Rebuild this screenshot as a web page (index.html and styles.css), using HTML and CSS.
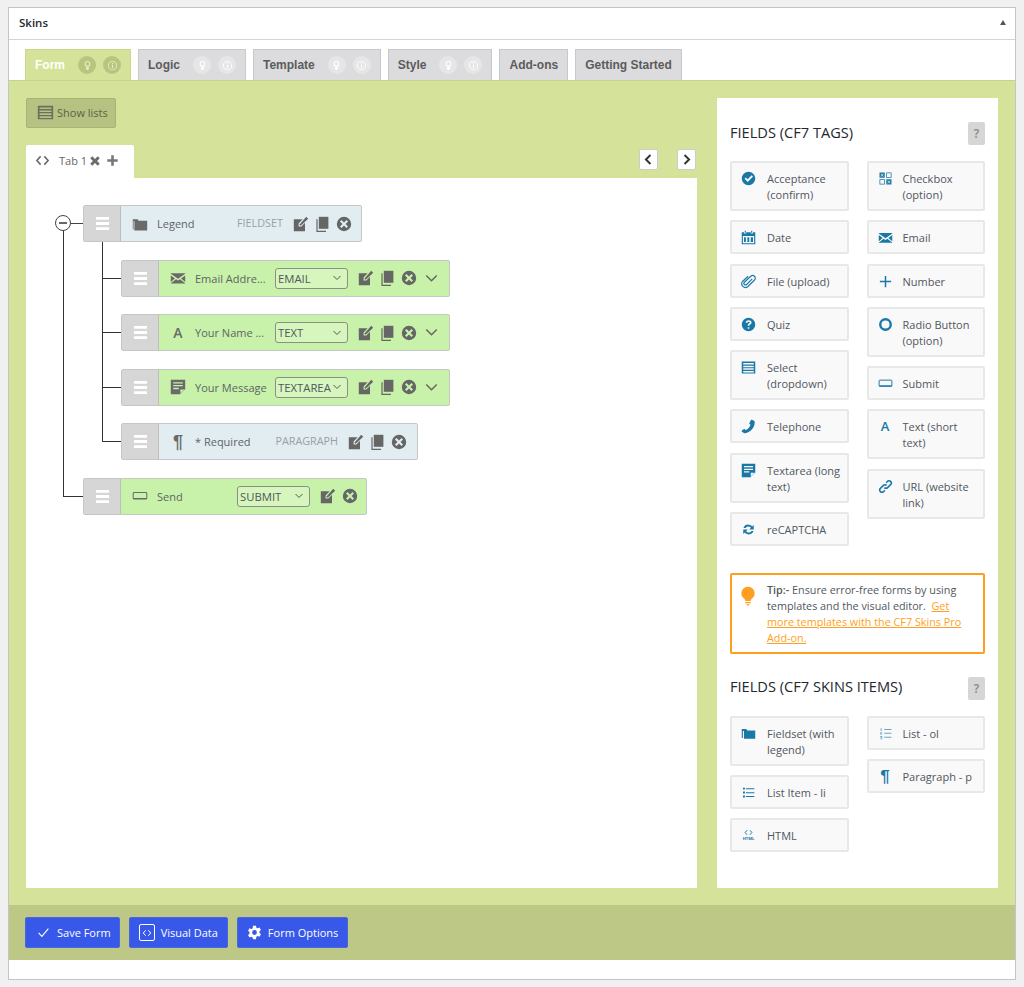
FILE: index.html
```html
<!DOCTYPE html>
<html lang="en">

<head>
    <meta charset="UTF-8">
    <meta name="viewport" content="width=device-width, initial-scale=1.0">
    <title>Skins</title>
    <link rel="stylesheet" href="styles.css">
</head>

<body>
    <svg class="sprite" xmlns="http://www.w3.org/2000/svg">
        <symbol id="i-bulb" viewBox="0 0 20 20"><path d="M10 1.500a6 6 0 0 0-3.600 10.800c.8.700 1 1.400 1.100 2.200h5c.1-.8.300-1.500 1.100-2.200A6 6 0 0 0 10 1.500z"/><path d="M7.500 15.500h5v1.200h-5zM8.300 17.500h3.400l-.8 1.200H9.100z"/></symbol>
        <symbol id="i-bulb-line" viewBox="0 0 20 20"><path d="M10 3a4.500 4.500 0 0 0-1.500 8.750V14H7.500v1.500h1V17h3v-1.500h1V14h-1v-2.250A4.500 4.500 0 0 0 10 3zm0 1.800a2.700 2.700 0 1 1 0 5.400 2.700 2.700 0 0 1 0-5.400z"/></symbol>
        <symbol id="i-info" viewBox="0 0 20 20"><path fill-rule="evenodd" d="M10 3a7 7 0 1 0 0 14 7 7 0 0 0 0-14zm0 1.300a5.700 5.700 0 1 1 0 11.400 5.700 5.700 0 0 1 0-11.400z"/><path d="M9.100 6h1.800v1.700H9.100zM9.100 8.700h1.800V14H9.100z"/></symbol>
        <symbol id="i-table" viewBox="0 0 20 20"><path fill-rule="evenodd" d="M1 2h18v16H1zm2 2v2h14V4zm0 3.500v2h14v-2zM3 11v2h14v-2zm0 3.500v2h14v-2z"/></symbol>
        <symbol id="i-code" viewBox="0 0 20 20"><path fill="none" stroke="currentColor" stroke-width="2" d="M7.500 4.500 2.500 10l5 5.500M12.500 4.500l5 5.500-5 5.500"/></symbol>
        <symbol id="i-cross" viewBox="0 0 20 20"><path d="M5.500 2 10 6.500 14.500 2 18 5.500 13.500 10l4.500 4.500-3.500 3.500L10 13.500 5.500 18 2 14.500 6.500 10 2 5.500z"/></symbol>
        <symbol id="i-plus" viewBox="0 0 20 20"><path d="M8 2h4v6h6v4h-6v6H8v-6H2V8h6z"/></symbol>
        <symbol id="i-thin-plus" viewBox="0 0 20 20"><path d="M9 2.500h2V9h6.500v2H11v6.500H9V11H2.500V9H9z"/></symbol>
        <symbol id="i-left" viewBox="0 0 20 20"><path fill="none" stroke="currentColor" stroke-width="3" d="M13 3 6 10l7 7"/></symbol>
        <symbol id="i-right" viewBox="0 0 20 20"><path fill="none" stroke="currentColor" stroke-width="3" d="m7 3 7 7-7 7"/></symbol>
        <symbol id="i-down" viewBox="0 0 20 20"><path fill="none" stroke="currentColor" stroke-width="2" d="m3 6 7 7 7-7"/></symbol>
        <symbol id="i-bars" viewBox="0 0 16 16"><path d="M1 1h14v3H1zM1 6.500h14v3H1zM1 12h14v3H1z"/></symbol>
        <symbol id="i-folder" viewBox="0 0 20 20"><path d="M1 4h6l1.500 2H19v11H4V6.500H2.500V16H1z"/></symbol>
        <symbol id="i-folder-tree" viewBox="0 0 20 20"><path d="M1 4h6l1.500 2H19v12H3V6.500H2V17H1z"/></symbol>
        <symbol id="i-edit" viewBox="0 0 20 20"><path d="M1 4h11l-5 5.500V13h3.500L15 8.500V19H1z"/><path d="M16.500 1 19 3.500 10 12H8.500v-1.700z"/></symbol>
        <symbol id="i-copy" viewBox="0 0 20 20"><path d="M6 1h12v15H6z"/><path d="M3 4h1.500v14.500H15V20H3z"/></symbol>
        <symbol id="i-close" viewBox="0 0 20 20"><path fill-rule="evenodd" d="M10 1a9 9 0 1 0 0 18 9 9 0 0 0 0-18zM6.900 5 10 8.100 13.100 5 15 6.900 11.900 10l3.100 3.100-1.900 1.900L10 11.900 6.900 15 5 13.100 8.100 10 5 6.900z"/></symbol>
        <symbol id="i-mail" viewBox="0 0 20 20"><path d="M1 4h18v.8L10 11 1 4.800zM1 6.800l5.200 3.700L1 15zM19 6.800v8.200l-5.200-4.500zM7.500 11.500 10 13.200l2.500-1.700 6.500 5v.500H1v-.500z"/></symbol>
        <symbol id="i-note" viewBox="0 0 20 20"><path fill-rule="evenodd" d="M1 1h18v11.500L12.500 19H1zm3 3v1.700h12V4zm0 3.500v1.700h12V7.500zM4 11v1.700h7V11zm9 7 5-5h-5z"/></symbol>
        <symbol id="i-button" viewBox="0 0 20 20"><path fill="none" stroke="currentColor" stroke-width="1.300" d="M2.500 5.500h15a1 1 0 0 1 1 1v6a1 1 0 0 1-1 1h-15a1 1 0 0 1-1-1v-6a1 1 0 0 1 1-1z"/><path d="M1.500 12.500h17v1.700h-17z"/></symbol>
        <symbol id="i-check-circle" viewBox="0 0 20 20"><path fill-rule="evenodd" d="M10 1a9 9 0 1 0 0 18 9 9 0 0 0 0-18zm4.200 4.800 1.800 1.600-7 7.100-4.200-4.200 1.700-1.700 2.500 2.500z"/></symbol>
        <symbol id="i-grid" viewBox="0 0 20 20"><path fill-rule="evenodd" d="M2 2h7v7H2zm2 1.500L3.500 4 5 5.500 3.500 7l.5.500L5.500 6 7 7.500l.5-.5L6 5.500 7.500 4 7 3.500 5.500 5zM11 2h7v7h-7zm1 1v5h5V3zM2 11h7v7H2zm1 1v5h5v-5zM11 11h7v7h-7zm2 1.500-.5.500 1.500 1.500-1.500 1.500.5.500 1.500-1.500 1.500 1.500.5-.5-1.500-1.500L16.500 13l-.5-.5-1.500 1.500z"/></symbol>
        <symbol id="i-calendar" viewBox="0 0 20 20"><path fill-rule="evenodd" d="M5 1h1.500v2.500H5zM13.500 1H15v2.500h-1.500zM1 3h3v1.500h3V3h6v1.500h3V3h3v16H1zm1.500 5v9.500h15V8zM4 9.500h2.500V16H4zM8.500 9.500H11V16H8.500zM13 9.500h3V16h-3z"/></symbol>
        <symbol id="i-clip" viewBox="0 0 20 20"><path fill="none" stroke="currentColor" stroke-width="1.500" d="M15 6.500 7.500 14a2 2 0 0 1-3-3l8.500-8a3.500 3.500 0 0 1 5 5l-9 9a5 5 0 0 1-7-7l7.500-7"/></symbol>
        <symbol id="i-help" viewBox="0 0 20 20"><path fill-rule="evenodd" d="M10 1a9 9 0 1 0 0 18 9 9 0 0 0 0-18zM9 13.500h2.200v2.200H9zM10.200 4.300c2.300 0 3.800 1.200 3.800 3 0 1.400-.8 2.100-1.800 2.800-.8.500-1 .8-1 1.700H9c0-1.700.5-2.400 1.500-3 .8-.5 1.200-.9 1.200-1.500 0-.7-.6-1.100-1.500-1.100-1 0-1.600.5-1.700 1.500H6.200c.1-2.200 1.600-3.400 4-3.400z"/></symbol>
        <symbol id="i-ring" viewBox="0 0 20 20"><circle cx="10" cy="10" r="7" fill="none" stroke="currentColor" stroke-width="3.200"/></symbol>
        <symbol id="i-phone" viewBox="0 0 20 20"><path d="M14.500 1 18 2.500c1 3.500-.5 7.500-3 10.700-2.800 3.200-6.800 5.500-10.800 5.800L1 16.500c-.3-.5-.2-1 .2-1.300l2.800-1.800c.4-.3 1-.2 1.300.2l1 1.300c2.800-1.200 5.500-4.300 6.400-7.300l-1.300-.9c-.4-.3-.5-.8-.3-1.200l2-4c.2-.5.500-.6.900-.5z"/></symbol>
        <symbol id="i-link" viewBox="0 0 20 20"><path fill="none" stroke="currentColor" stroke-width="2" d="M8.500 11.500a3 3 0 0 0 4.300 0l4-4a3 3 0 0 0-4.300-4.300L10.800 5M11.500 8.500a3 3 0 0 0-4.300 0l-4 4a3 3 0 0 0 4.300 4.300L9.200 15"/></symbol>
        <symbol id="i-sync" viewBox="0 0 20 20"><path d="M10 3.500c2 0 3.800.9 5 2.400l2-2V10h-6l2.200-2.200A4.300 4.300 0 0 0 6 8H3.300A6.900 6.900 0 0 1 10 3.500zM3 10h6l-2.200 2.200A4.300 4.300 0 0 0 14 12h2.700A6.900 6.900 0 0 1 5 14.100l-2 2z"/></symbol>
        <symbol id="i-ol" viewBox="0 0 20 20"><path d="M8 3h11v1.500H8zM8 9h11v1.500H8zM8 15h11v1.500H8zM2.500 2H4v4H2.500zM1.500 8H5v1l-2 1.500h2v1H1.500v-1l2-1.500h-2zM1.500 14H5v5H1.500v-1h2.300v-1H2v-1h1.800v-1H1.500z"/></symbol>
        <symbol id="i-ul" viewBox="0 0 20 20"><path d="M6 3.500h13V5H6zM6 9.500h13V11H6zM6 15.500h13V17H6zM1.500 2.500h3v3h-3zM1.500 8.500h3v3h-3zM1.500 14.500h3v3h-3z"/></symbol>
        <symbol id="i-gear" viewBox="0 0 20 20"><path fill-rule="evenodd" d="M8 1h4l.5 2.500 1.700.8 2.400-1.100 2 3.400-1.900 1.700v2.400l1.900 1.700-2 3.400-2.400-1.100-1.700.8L12 19H8l-.5-2.500-1.700-.8-2.400 1.100-2-3.400 1.900-1.700V9.300L1.400 7.600l2-3.400 2.400 1.100 1.700-.8zM10 6.800a3.200 3.200 0 1 0 0 6.400 3.200 3.200 0 0 0 0-6.400z"/></symbol>
        <symbol id="i-check" viewBox="0 0 20 20"><path fill="none" stroke="currentColor" stroke-width="1.700" d="m2.500 10.500 5 5.500 10-12"/></symbol>
    </svg>

    <div class="metabox">
        <div class="metabox-head">
            <h2>Skins</h2>
            <span class="collapse"></span>
        </div>

        <div class="tabs">
            <div class="tab active">Form
                <span class="bubble bubble-first"><svg><use href="#i-bulb-line"/></svg></span>
                <span class="bubble"><svg><use href="#i-info"/></svg></span>
            </div>
            <div class="tab">Logic
                <span class="bubble bubble-first"><svg><use href="#i-bulb-line"/></svg></span>
                <span class="bubble"><svg><use href="#i-info"/></svg></span>
            </div>
            <div class="tab">Template
                <span class="bubble bubble-first"><svg><use href="#i-bulb-line"/></svg></span>
                <span class="bubble"><svg><use href="#i-info"/></svg></span>
            </div>
            <div class="tab">Style
                <span class="bubble bubble-first"><svg><use href="#i-bulb-line"/></svg></span>
                <span class="bubble"><svg><use href="#i-info"/></svg></span>
            </div>
            <div class="tab">Add-ons</div>
            <div class="tab">Getting Started</div>
        </div>

        <div class="main">
            <div class="editor">
                <button class="show-lists"><svg><use href="#i-table"/></svg>Show lists</button>

                <div class="form-tabs">
                    <div class="form-tab">
                        <svg class="code"><use href="#i-code"/></svg>
                        <span>Tab 1</span>
                        <svg class="tab-x"><use href="#i-cross"/></svg>
                        <svg class="tab-plus"><use href="#i-plus"/></svg>
                    </div>
                    <div class="nav-btns">
                        <button class="nav-btn"><svg><use href="#i-left"/></svg></button>
                        <button class="nav-btn"><svg><use href="#i-right"/></svg></button>
                    </div>
                </div>

                <div class="canvas">
                    <ul class="tree">
                        <li class="tree-root">
                            <span class="toggle"></span>
                            <div class="node node-blue node-fieldset">
                                <div class="handle"><svg><use href="#i-bars"/></svg></div>
                                <svg class="node-icon"><use href="#i-folder-tree"/></svg>
                                <span class="node-label">Legend</span>
                                <span class="node-type">FIELDSET</span>
                                <div class="actions">
                                    <svg class="a-edit"><use href="#i-edit"/></svg>
                                    <svg class="a-copy"><use href="#i-copy"/></svg>
                                    <svg class="a-close"><use href="#i-close"/></svg>
                                </div>
                            </div>
                            <ul class="children">
                                <li>
                                    <div class="node node-green node-field">
                                        <div class="handle"><svg><use href="#i-bars"/></svg></div>
                                        <svg class="node-icon"><use href="#i-mail"/></svg>
                                        <span class="node-label">Email Addre...</span>
                                        <div class="type-select">EMAIL<svg><use href="#i-down"/></svg></div>
                                        <div class="actions">
                                            <svg class="a-edit"><use href="#i-edit"/></svg>
                                            <svg class="a-copy"><use href="#i-copy"/></svg>
                                            <svg class="a-close"><use href="#i-close"/></svg>
                                            <svg class="a-down"><use href="#i-down"/></svg>
                                        </div>
                                    </div>
                                </li>
                                <li>
                                    <div class="node node-green node-field">
                                        <div class="handle"><svg><use href="#i-bars"/></svg></div>
                                        <span class="node-icon node-glyph">A</span>
                                        <span class="node-label">Your Name ...</span>
                                        <div class="type-select">TEXT<svg><use href="#i-down"/></svg></div>
                                        <div class="actions">
                                            <svg class="a-edit"><use href="#i-edit"/></svg>
                                            <svg class="a-copy"><use href="#i-copy"/></svg>
                                            <svg class="a-close"><use href="#i-close"/></svg>
                                            <svg class="a-down"><use href="#i-down"/></svg>
                                        </div>
                                    </div>
                                </li>
                                <li>
                                    <div class="node node-green node-field">
                                        <div class="handle"><svg><use href="#i-bars"/></svg></div>
                                        <svg class="node-icon"><use href="#i-note"/></svg>
                                        <span class="node-label">Your Message</span>
                                        <div class="type-select">TEXTAREA<svg><use href="#i-down"/></svg></div>
                                        <div class="actions">
                                            <svg class="a-edit"><use href="#i-edit"/></svg>
                                            <svg class="a-copy"><use href="#i-copy"/></svg>
                                            <svg class="a-close"><use href="#i-close"/></svg>
                                            <svg class="a-down"><use href="#i-down"/></svg>
                                        </div>
                                    </div>
                                </li>
                                <li>
                                    <div class="node node-blue node-para">
                                        <div class="handle"><svg><use href="#i-bars"/></svg></div>
                                        <span class="node-icon node-glyph node-pilcrow">¶</span>
                                        <span class="node-label">* Required</span>
                                        <span class="node-type">PARAGRAPH</span>
                                        <div class="actions">
                                            <svg class="a-edit"><use href="#i-edit"/></svg>
                                            <svg class="a-copy"><use href="#i-copy"/></svg>
                                            <svg class="a-close"><use href="#i-close"/></svg>
                                        </div>
                                    </div>
                                </li>
                            </ul>
                        </li>
                        <li class="tree-last">
                            <div class="node node-green node-send">
                                <div class="handle"><svg><use href="#i-bars"/></svg></div>
                                <svg class="node-icon"><use href="#i-button"/></svg>
                                <span class="node-label">Send</span>
                                <div class="type-select">SUBMIT<svg><use href="#i-down"/></svg></div>
                                <div class="actions">
                                    <svg class="a-edit"><use href="#i-edit"/></svg>
                                    <svg class="a-close"><use href="#i-close"/></svg>
                                </div>
                            </div>
                        </li>
                    </ul>
                </div>
            </div>

            <div class="panel">
                <div class="panel-head">
                    <h3>FIELDS (CF7 TAGS)</h3>
                    <span class="help">?</span>
                </div>
                <div class="cards">
                    <div class="card-col">
                        <div class="card"><svg><use href="#i-check-circle"/></svg><span>Acceptance (confirm)</span></div>
                        <div class="card"><svg><use href="#i-calendar"/></svg><span>Date</span></div>
                        <div class="card"><svg><use href="#i-clip"/></svg><span>File (upload)</span></div>
                        <div class="card"><svg><use href="#i-help"/></svg><span>Quiz</span></div>
                        <div class="card"><svg><use href="#i-table"/></svg><span>Select (dropdown)</span></div>
                        <div class="card"><svg><use href="#i-phone"/></svg><span>Telephone</span></div>
                        <div class="card"><svg><use href="#i-note"/></svg><span>Textarea (long text)</span></div>
                        <div class="card"><svg><use href="#i-sync"/></svg><span>reCAPTCHA</span></div>
                    </div>
                    <div class="card-col">
                        <div class="card"><svg><use href="#i-grid"/></svg><span>Checkbox (option)</span></div>
                        <div class="card"><svg><use href="#i-mail"/></svg><span>Email</span></div>
                        <div class="card"><svg><use href="#i-thin-plus"/></svg><span>Number</span></div>
                        <div class="card"><svg><use href="#i-ring"/></svg><span>Radio Button (option)</span></div>
                        <div class="card"><svg><use href="#i-button"/></svg><span>Submit</span></div>
                        <div class="card"><i class="card-glyph">A</i><span>Text (short text)</span></div>
                        <div class="card"><svg><use href="#i-link"/></svg><span>URL (website link)</span></div>
                    </div>
                </div>

                <div class="tip">
                    <svg><use href="#i-bulb"/></svg>
                    <p><span class="tip-label">Tip:-</span> Ensure error-free forms by using templates and the visual editor. &nbsp;<a href="#">Get more templates with the CF7 Skins Pro Add-on.</a></p>
                </div>

                <div class="panel-head panel-head-second">
                    <h3>FIELDS (CF7 SKINS ITEMS)</h3>
                    <span class="help">?</span>
                </div>
                <div class="cards">
                    <div class="card-col">
                        <div class="card"><svg><use href="#i-folder"/></svg><span>Fieldset (with legend)</span></div>
                        <div class="card"><svg class="small-icon"><use href="#i-ul"/></svg><span>List Item - li</span></div>
                        <div class="card"><svg viewBox="0 0 20 20"><path fill="none" stroke="currentColor" stroke-width="1.300" d="M8 3 5.500 6 8 9M12 3l2.500 3L12 9"/><text class="html-mark" x="10" y="16" text-anchor="middle">HTML</text></svg><span>HTML</span></div>
                    </div>
                    <div class="card-col">
                        <div class="card"><svg class="small-icon light-icon"><use href="#i-ol"/></svg><span>List - ol</span></div>
                        <div class="card"><i class="card-glyph card-pilcrow">¶</i><span>Paragraph - p</span></div>
                    </div>
                </div>
            </div>
        </div>

        <div class="actions-bar">
            <button class="btn"><svg class="btn-check"><use href="#i-check"/></svg>Save Form</button>
            <button class="btn btn-visual"><span class="code-box"><svg><use href="#i-code"/></svg></span>Visual Data</button>
            <button class="btn btn-options"><svg class="btn-gear"><use href="#i-gear"/></svg>Form Options</button>
        </div>
    </div>
</body>

</html>
```

FILE: styles.css
```css
* {
    box-sizing: border-box;
}

body {
    background-color: #f0f0f1;
    margin: 0;
    padding: 7px 8px;
    font-family: "Open Sans", "Liberation Sans", sans-serif;
    font-size: 11px;
    color: #50575e;
}

ul {
    list-style: none;
    margin: 0;
    padding: 0;
}

button {
    font-family: inherit;
}

svg {
    fill: currentColor;
}

.sprite {
    display: none;
}

.metabox {
    background-color: #fff;
    border: 1px solid #c3c4c7;
    height: 973px;
}

.metabox-head {
    height: 32px;
    border-bottom: 1px solid #d5d5d5;
    display: flex;
    align-items: center;
    justify-content: space-between;
    padding: 0 9px 3px 10px;
}

.metabox-head h2 {
    margin: 0;
    font-size: 11.500px;
    font-weight: 600;
    color: #23282d;
}

.collapse {
    width: 0;
    height: 0;
    border-left: 3.500px solid transparent;
    border-right: 3.500px solid transparent;
    border-bottom: 5px solid #555;
}

/* main tabs */
.tabs {
    display: flex;
    gap: 7px;
    padding: 9px 0 0 16px;
    height: 40px;
}

.tab {
    position: relative;
    height: 31px;
    padding: 0 9px;
    display: flex;
    align-items: center;
    background-color: #dcdcde;
    border: 1px solid #c8c8ca;
    border-bottom: none;
    font-family: "Liberation Sans", sans-serif;
    font-weight: 700;
    font-size: 12px;
    color: #5b5b5b;
}

.tab.active {
    background-color: #d5e39a;
    border-color: #c9d88c;
    color: #fff;
}

.bubble {
    width: 18px;
    height: 18px;
    margin-left: 7px;
    border-radius: 50%;
    background-color: #e6e6e7;
    color: #fff;
    display: flex;
    align-items: center;
    justify-content: center;
}

.bubble-first {
    margin-left: 13px;
}

.bubble svg {
    width: 13px;
    height: 13px;
}

.tab.active .bubble {
    background-color: #b7c67f;
    color: #e4edc0;
}

.main {
    height: 825px;
    background-color: #d5e39a;
    border-top: 1px solid #c3d58b;
    padding: 17px;
    display: flex;
    gap: 20px;
}

.editor {
    width: 671px;
    display: flex;
    flex-direction: column;
}

.show-lists {
    width: 90px;
    height: 30px;
    padding: 0 0 2px 10px;
    display: flex;
    align-items: center;
    gap: 3px;
    background-color: #b6c282;
    border: 1px solid #a6b374;
    border-radius: 2px;
    color: #5c6148;
    font-size: 11px;
}

.show-lists svg {
    width: 17px;
    height: 17px;
    color: #6a6f5e;
}

.form-tabs {
    margin-top: 17px;
    height: 33px;
    display: flex;
    justify-content: space-between;
}

.form-tab {
    width: 108px;
    background-color: #fff;
    border-radius: 2px 2px 0 0;
    display: flex;
    align-items: center;
    padding: 0 0 2px 9px;
    color: #666;
}

.form-tab .code {
    width: 15px;
    height: 15px;
    color: #666;
}

.form-tab span {
    margin-left: 9px;
}

.tab-x {
    width: 12px;
    height: 12px;
    margin-left: 2px;
    color: #6d6d6d;
}

.tab-plus {
    width: 13px;
    height: 13px;
    margin-left: 5px;
    color: #777;
}

.nav-btns {
    display: flex;
    gap: 19px;
    padding: 4px 1px 0 0;
}

.nav-btn {
    width: 19px;
    height: 21px;
    padding: 0;
    background-color: #fff;
    border: 1px solid #ccc;
    border-radius: 2px;
    display: flex;
    align-items: center;
    justify-content: center;
    color: #333;
}

.nav-btn svg {
    width: 13px;
    height: 13px;
}

.canvas {
    flex: 1;
    background-color: #fff;
    padding: 27px 0 0 57px;
}

/* tree of fields */
.tree > li,
.children > li {
    position: relative;
}

.tree-root::before {
    content: "";
    position: absolute;
    left: -20px;
    top: 25px;
    bottom: -36px;
    width: 1px;
    background-color: #333;
}

.toggle {
    position: absolute;
    left: -28px;
    top: 10px;
    width: 16px;
    height: 16px;
    border: 1px solid #444;
    border-radius: 50%;
    background-color: #fff;
}

.toggle::before {
    content: "";
    position: absolute;
    left: 3px;
    right: 3px;
    top: 6px;
    height: 2px;
    background-color: #666;
}

.toggle::after {
    content: "";
    position: absolute;
    left: 15px;
    top: 7px;
    width: 12px;
    height: 1px;
    background-color: #444;
}

.tree-last {
    margin-top: 17.500px;
}

.tree-last::before {
    content: "";
    position: absolute;
    left: -20px;
    top: 18px;
    width: 20px;
    height: 1px;
    background-color: #333;
}

.children {
    position: relative;
    padding-left: 38px;
    display: flow-root;
}

.children::before {
    content: "";
    position: absolute;
    left: 19px;
    top: 0;
    bottom: 18px;
    width: 1px;
    background-color: #333;
}

.children > li {
    margin-top: 17.500px;
}

.children > li::before {
    content: "";
    position: absolute;
    left: -19px;
    top: 18px;
    width: 19px;
    height: 1px;
    background-color: #333;
}

.node {
    height: 37px;
    display: flex;
    align-items: center;
    border: 1px solid #c4c7c5;
    border-radius: 2px;
    color: #5f6368;
}

.node-green {
    background-color: #c8f2a9;
}

.node-blue {
    background-color: #e2edf2;
}

.node-fieldset {
    width: 279px;
}

.node-field {
    width: 329px;
}

.node-para {
    width: 297px;
}

.node-send {
    width: 284px;
}

.handle {
    width: 37px;
    height: 100%;
    flex-shrink: 0;
    background-color: #d6d6d6;
    border-right: 1px solid #bdbdbd;
    display: flex;
    align-items: center;
    justify-content: center;
    color: #fff;
}

.handle svg {
    width: 15px;
    height: 15px;
}

.node-icon {
    width: 16px;
    height: 16px;
    flex-shrink: 0;
    margin-left: 11px;
    color: #6a6a6a;
}

.node-glyph {
    display: block;
    height: auto;
    text-align: center;
    font-size: 14px;
    line-height: 16px;
    font-weight: 600;
}

.node-pilcrow {
    font-family: "Liberation Sans", sans-serif;
    font-size: 18px;
    font-weight: 700;
}

.node-label {
    width: 80px;
    margin-left: 9px;
    white-space: nowrap;
    flex-shrink: 0;
}

.node-type {
    margin-left: auto;
    color: #9a9fa3;
    font-size: 10.800px;
    padding-bottom: 2px;
}

.type-select {
    width: 73px;
    height: 21px;
    flex-shrink: 0;
    display: flex;
    align-items: center;
    justify-content: space-between;
    padding: 0 5px 0 2px;
    background-color: #d6f6bd;
    border: 1px solid #8a8f87;
    border-radius: 3px;
    color: #50575e;
    font-size: 11.300px;
}

.type-select svg {
    width: 10px;
    height: 10px;
    flex-shrink: 0;
    margin-left: 1px;
}

.node-send .type-select {
    margin-left: auto;
}

.actions {
    display: flex;
    align-items: center;
    margin-left: 10px;
    padding-right: 10px;
    color: #666;
}

.node-send .actions {
    padding-right: 9px;
}

.a-edit,
.a-copy,
.a-close {
    width: 16px;
    height: 16px;
}

.a-copy {
    margin-left: 5px;
}

.a-close {
    margin-left: 6px;
}

.a-down {
    width: 15px;
    height: 15px;
    margin-left: 7px;
}

/* right panel */
.panel {
    width: 281px;
    background-color: #fff;
    padding: 24px 13px 0;
}

.panel-head {
    height: 23px;
    display: flex;
    align-items: center;
    justify-content: space-between;
}

.panel-head-second {
    margin-top: 23px;
}

.panel-head h3 {
    margin: 0 0 4px;
    font-size: 14.600px;
    font-weight: 500;
    color: #23282d;
}

.help {
    width: 17px;
    height: 23px;
    background-color: #d6d6d6;
    border-radius: 2px;
    text-align: center;
    line-height: 23px;
    font-size: 12px;
    font-weight: 600;
    color: #888;
}

.cards {
    margin-top: 16px;
    display: grid;
    grid-template-columns: 1fr 1fr;
    gap: 18px;
}

.card-col {
    display: flex;
    flex-direction: column;
    gap: 9.250px;
}

.card {
    display: flex;
    align-items: flex-start;
    padding: 8px 4px 6px 9px;
    background-color: #f9f9f9;
    border: 2px solid #e8e8e8;
    border-radius: 2px;
    line-height: 16px;
    color: #50575e;
}

.card svg {
    width: 15px;
    height: 15px;
    flex-shrink: 0;
    color: #1a78a7;
}

.card .small-icon {
    width: 13px;
    height: 13px;
    margin: 1px 1px 0 1px;
}

.card .light-icon {
    color: #6ba5c3;
}

.card span {
    margin-left: 11px;
}

.card-col + .card-col span {
    margin-left: 10px;
}

.card-glyph {
    width: 15px;
    flex-shrink: 0;
    font-style: normal;
    font-weight: 600;
    font-size: 13px;
    line-height: 15px;
    text-align: center;
    color: #1a78a7;
}

.card-pilcrow {
    font-family: "Liberation Sans", sans-serif;
    font-weight: 700;
    font-size: 17px;
}

.html-mark {
    font-size: 5.500px;
    font-weight: 700;
    fill: currentColor;
}

.tip {
    margin-top: 27px;
    height: 81px;
    display: flex;
    padding: 7px 6px 0 5px;
    border: 2px solid #ff9f20;
    border-radius: 2px;
    font-size: 10.800px;
    line-height: 16px;
    color: #50575e;
}

.tip svg {
    width: 22px;
    height: 22px;
    flex-shrink: 0;
    margin-top: 3px;
    color: #ff9f20;
}

.tip p {
    margin: 0 0 0 8px;
}

.tip-label {
    font-weight: 600;
}

.tip a {
    color: #ff9f20;
}

/* footer buttons */
.actions-bar {
    height: 55px;
    background-color: #bdc886;
    padding: 12px 16px;
    display: flex;
    gap: 9px;
}

.btn {
    height: 31px;
    display: flex;
    align-items: center;
    padding: 0 8px 0 11px;
    background-color: #3858e9;
    border: 1px solid #4a66d8;
    border-radius: 2px;
    color: #fff;
    font-size: 11px;
}

.btn-check {
    width: 13px;
    height: 13px;
    margin-right: 7px;
}

.btn-visual,
.btn-options {
    padding: 0 9px;
}

.code-box {
    width: 16px;
    height: 17px;
    margin-right: 6px;
    border: 1px solid #fff;
    border-radius: 2px;
    display: flex;
    align-items: center;
    justify-content: center;
}

.code-box svg {
    width: 10px;
    height: 10px;
}

.btn-gear {
    width: 15px;
    height: 15px;
    margin-right: 6px;
}
```
